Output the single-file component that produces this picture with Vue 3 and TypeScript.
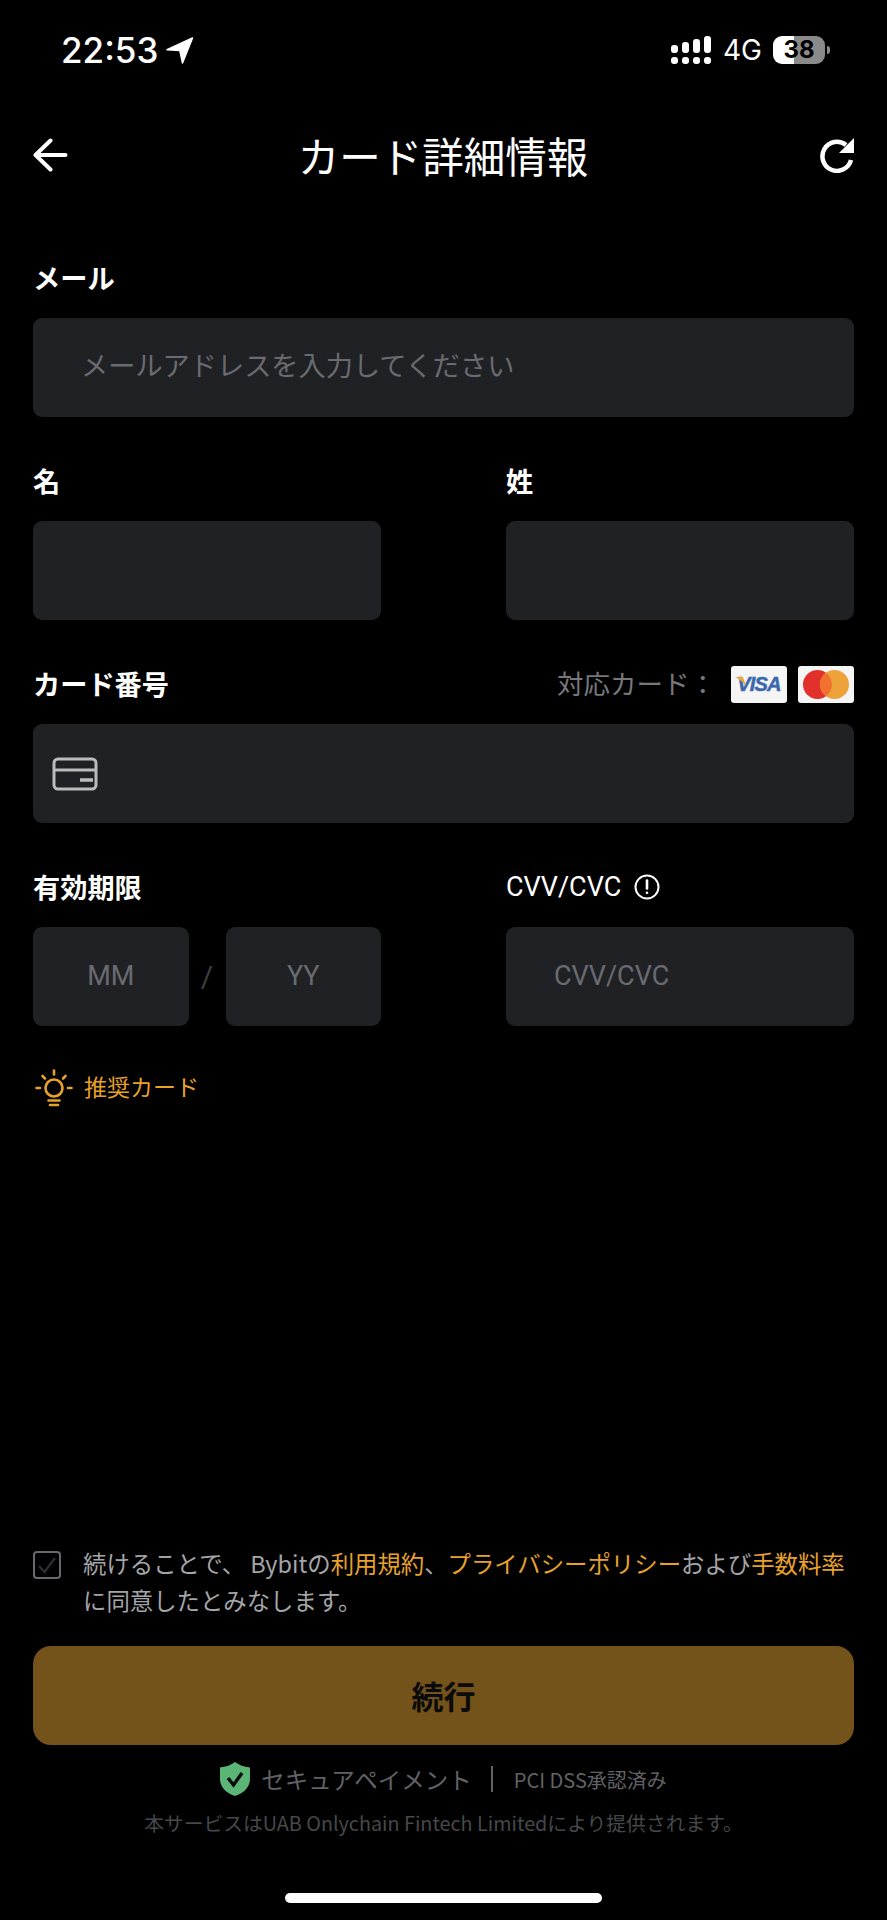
<script setup lang="ts">
const signalBars = [8, 11, 14, 17];
</script>

<template>
  <div class="page">
    <div class="status">
      <div class="status-left">
        <span class="time">22:53</span>
        <svg class="loc" width="28" height="27" viewBox="0 0 28 27">
          <path d="M26.500 1 1 12.800l12.800 .6L16.500 26z" fill="#fff" stroke="#fff" stroke-width="1.500" stroke-linejoin="round" />
        </svg>
      </div>
      <div class="status-right">
        <div class="signal">
          <div v-for="h in signalBars" :key="h" class="sig-col">
            <span class="sig-top" :style="{ height: h + 'px' }"></span>
            <span class="sig-dot"></span>
          </div>
        </div>
        <span class="net">4G</span>
        <div class="battery"><span>38</span></div>
        <span class="nub"></span>
      </div>
    </div>

    <div class="nav">
      <svg width="36" height="36" viewBox="0 0 36 36" fill="none" stroke="#fff" stroke-width="4" stroke-linecap="round" stroke-linejoin="round">
        <path d="M32.500 18H3M17.500 3.500 2.500 18l15 14.500" />
      </svg>
      <h1 class="title">カード詳細情報</h1>
      <svg width="36" height="36" viewBox="0 0 36 36" fill="none">
        <path d="M26 8A14.500 14.500 0 1 0 31 23" stroke="#fff" stroke-width="4.500" />
        <path d="M34 1v15H19z" fill="#fff" />
      </svg>
    </div>

    <div class="form">
      <div class="field">
        <label class="label">メール</label>
        <div class="input"><span class="ph">メールアドレスを入力してください</span></div>
      </div>

      <div class="two">
        <div class="field">
          <label class="label">名</label>
          <div class="input"></div>
        </div>
        <div class="field">
          <label class="label">姓</label>
          <div class="input"></div>
        </div>
      </div>

      <div class="field">
        <div class="label-row">
          <label class="label">カード番号</label>
          <div class="supported">
            <span class="supported-text">対応カード：</span>
            <div class="brand visa">
              <svg class="flick" width="11" height="9" viewBox="0 0 11 9"><path d="M0 0h8l3 9C8 5 4 2 0 0z" fill="#e9a93a" /></svg>
              <span class="visa-text">VISA</span>
            </div>
            <div class="brand">
              <svg width="46" height="29" viewBox="0 0 46 29">
                <circle cx="14.500" cy="14.500" r="14.500" fill="#e2302b" />
                <circle cx="31.500" cy="14.500" r="14.500" fill="#eea23a" />
                <path d="M23 2.800a14.500 14.500 0 0 1 0 23.400 14.500 14.500 0 0 1 0-23.400z" fill="#f0722e" />
              </svg>
            </div>
          </div>
        </div>
        <div class="input card-input">
          <svg width="46" height="34" viewBox="0 0 46 34" fill="none" stroke="#bcbcbc" stroke-width="3">
            <rect x="2" y="2" width="42" height="30" rx="4" />
            <path d="M2 13h42" />
            <path d="M28 23h13" stroke-width="3.500" />
          </svg>
        </div>
      </div>

      <div class="two">
        <div class="field">
          <label class="label">有効期限</label>
          <div class="expiry">
            <div class="input center"><span class="ph latin">MM</span></div>
            <span class="slash">/</span>
            <div class="input center"><span class="ph latin">YY</span></div>
          </div>
        </div>
        <div class="field">
          <div class="cvv-label">
            <span>CVV/CVC</span>
            <svg width="26" height="26" viewBox="0 0 26 26" fill="none" stroke="#fff">
              <circle cx="13" cy="13" r="11.500" stroke-width="2" />
              <path d="M13 6.500v8" stroke-width="2.600" stroke-linecap="round" />
              <circle cx="13" cy="18.800" r="1.300" fill="#fff" stroke="none" />
            </svg>
          </div>
          <div class="input"><span class="ph latin">CVV/CVC</span></div>
        </div>
      </div>

      <div class="recommend">
        <svg width="38" height="38" viewBox="0 0 38 38" fill="none" stroke="#e8a22a" stroke-width="2.600" stroke-linecap="round">
          <circle cx="19" cy="19" r="8.500" />
          <path d="M19 1.500v4M7.500 7l2.500 2.500M30.500 7 28 9.500M1.500 19H5M33 19h3.500M13.500 31.500h11M15 36h8" />
        </svg>
        <span>推奨カード</span>
      </div>
    </div>

    <div class="bottom">
      <div class="agree">
        <div class="check">
          <svg width="20" height="20" viewBox="0 0 20 20" fill="none" stroke="#2c2c2e" stroke-width="2.400">
            <path d="M2 11l5.500 6L18 3" />
          </svg>
        </div>
        <p>続けることで、 Bybitの<a>利用規約</a>、<a>プライバシーポリシー</a>および<a>手数料率</a>に同意したとみなします。</p>
      </div>

      <button class="submit">続行</button>

      <div class="secure">
        <svg width="30" height="34" viewBox="0 0 30 34">
          <path d="M15 0c4 3 9 5 15 5.500V17c0 8-6 14-15 17C6 31 0 25 0 17V5.500C6 5 11 3 15 0z" fill="#5bb577" />
          <path d="M8 16l5.500 7L22 11" fill="none" stroke="#0b0b0b" stroke-width="3.400" />
        </svg>
        <span class="secure-text">セキュアペイメント</span>
        <span class="sep"></span>
        <span class="pci">PCI DSS承認済み</span>
      </div>

      <p class="provider">本サービスはUAB Onlychain Fintech Limitedにより提供されます。</p>

      <div class="home"></div>
    </div>
  </div>
</template>

<style scoped>
.page {
  width: 887px;
  height: 1920px;
  display: flex;
  flex-direction: column;
  background: #000;
  color: #fff;
  font-family: "Noto Sans CJK JP", "Roboto", sans-serif;
  overflow: hidden;
}

.status {
  height: 100px;
  padding: 0 57px 0 61px;
  display: flex;
  align-items: center;
  justify-content: space-between;
  box-sizing: border-box;
}
.status-left {
  display: flex;
  align-items: center;
  gap: 8px;
}
.time {
  font-family: Inter, sans-serif;
  font-size: 35px;
  font-weight: 500;
  line-height: 40px;
}
.status-right {
  display: flex;
  align-items: center;
}
.signal {
  display: flex;
  gap: 4px;
  width: 40px;
}
.sig-col {
  height: 28px;
  width: 7px;
  display: flex;
  flex-direction: column;
  justify-content: flex-end;
  gap: 4px;
}
.sig-top,
.sig-dot {
  display: block;
  border-radius: 3px;
  background: #fff;
}
.sig-dot {
  height: 7px;
}
.net {
  margin-left: 12px;
  font-family: Inter, sans-serif;
  font-size: 28px;
  font-weight: 400;
  line-height: 30px;
}
.battery {
  margin-left: 11px;
  width: 52px;
  height: 28px;
  border-radius: 9px;
  background: linear-gradient(90deg, #fff 0 21px, #8a8a8a 21px);
  color: #000;
  font-family: Inter, sans-serif;
  font-size: 24px;
  font-weight: 700;
  line-height: 28px;
  text-align: center;
}
.nub {
  margin-left: 2px;
  width: 3px;
  height: 8px;
  border-radius: 0 3px 3px 0;
  background: #8a8a8a;
}

.nav {
  height: 110px;
  padding: 0 31px 0 33px;
  display: flex;
  align-items: center;
  justify-content: space-between;
  box-sizing: border-box;
}
.title {
  margin: 0 3px 0 0;
  font-size: 41.500px;
  font-weight: 400;
  line-height: 50px;
}

.form {
  padding: 48px 33px 0;
  display: flex;
  flex-direction: column;
  gap: 44px;
}
.field {
  display: flex;
  flex-direction: column;
  gap: 20px;
  min-width: 0;
}
.label {
  height: 40px;
  padding-bottom: 2px;
  box-sizing: border-box;
  font-size: 27.200px;
  font-weight: 700;
  line-height: 38px;
}
.label-row {
  display: flex;
  align-items: center;
  justify-content: space-between;
  height: 40px;
}
.supported {
  display: flex;
  align-items: center;
  color: #77787c;
  font-size: 26.500px;
  line-height: 38px;
}
.supported-text {
  margin-right: 4px;
  padding-bottom: 2px;
}
.brand {
  position: relative;
  width: 56px;
  height: 37px;
  margin-left: 11px;
  display: flex;
  align-items: center;
  justify-content: center;
  border-radius: 3px;
  background: #f5f5f5;
}
.visa-text {
  color: #3b67ad;
  font-family: "Liberation Sans", sans-serif;
  font-size: 20px;
  font-style: italic;
  font-weight: 700;
  letter-spacing: -0.800px;
  -webkit-text-stroke: 0.500px #3b67ad;
  line-height: 20px;
}
.flick {
  position: absolute;
  left: 4px;
  top: 11px;
}
.input {
  height: 99px;
  padding: 0 48px;
  display: flex;
  align-items: center;
  box-sizing: border-box;
  background: #202125;
  border-radius: 9px;
}
.ph {
  padding-bottom: 7px;
  color: #6a6b70;
  font-size: 27.200px;
}
.latin {
  padding-bottom: 2px;
  font-family: Roboto, sans-serif;
  font-size: 27px;
}
.card-input {
  padding: 0 19px;
}
.two {
  display: grid;
  grid-template-columns: 348px 348px;
  justify-content: space-between;
}
.expiry {
  display: flex;
  align-items: center;
}
.expiry .input {
  flex: 1;
}
.center {
  justify-content: center;
  padding: 0;
}
.slash {
  width: 37px;
  text-align: center;
  color: #3d3e42;
  font-family: Roboto, sans-serif;
  font-size: 30px;
}
.cvv-label {
  display: flex;
  align-items: center;
  gap: 13px;
  height: 40px;
  font-family: Roboto, sans-serif;
  font-size: 27px;
}

.recommend {
  margin-top: -2px;
  padding-left: 2px;
  height: 40px;
  display: flex;
  align-items: center;
  gap: 11px;
  color: #e8a22a;
  font-size: 23px;
}
.recommend span {
  padding-bottom: 4px;
}

.bottom {
  margin-top: auto;
  padding: 0 33px 17px;
  display: flex;
  flex-direction: column;
}
.agree {
  display: flex;
  gap: 22px;
}
.check {
  flex: none;
  width: 28px;
  height: 28px;
  margin-top: 6px;
  display: flex;
  align-items: center;
  justify-content: center;
  box-sizing: border-box;
  border: 2.500px solid #68696c;
  border-radius: 4px;
}
.agree p {
  margin: 0;
  color: #a4a5a8;
  font-size: 23.400px;
  line-height: 37px;
}
.agree a {
  color: #e8a22a;
}
.submit {
  margin-top: 27px;
  height: 99px;
  padding-bottom: 2px;
  border: none;
  border-radius: 18px;
  background: #74531a;
  color: #0b0b0b;
  font-family: inherit;
  font-size: 32px;
  font-weight: 700;
}
.secure {
  margin-top: 16px;
  height: 36px;
  display: flex;
  align-items: center;
  justify-content: center;
  color: #616266;
}
.secure-text {
  margin-left: 11px;
  font-size: 23.500px;
}
.sep {
  width: 2px;
  height: 26px;
  margin: 0 21px 0 19px;
  background: #616266;
}
.pci {
  font-size: 20px;
}
.provider {
  margin: 11px 0 0;
  color: #47484b;
  font-size: 19.800px;
  line-height: 30px;
  text-align: center;
}
.home {
  align-self: center;
  width: 317px;
  height: 10px;
  margin-top: 55px;
  border-radius: 5px;
  background: #fff;
}
</style>
